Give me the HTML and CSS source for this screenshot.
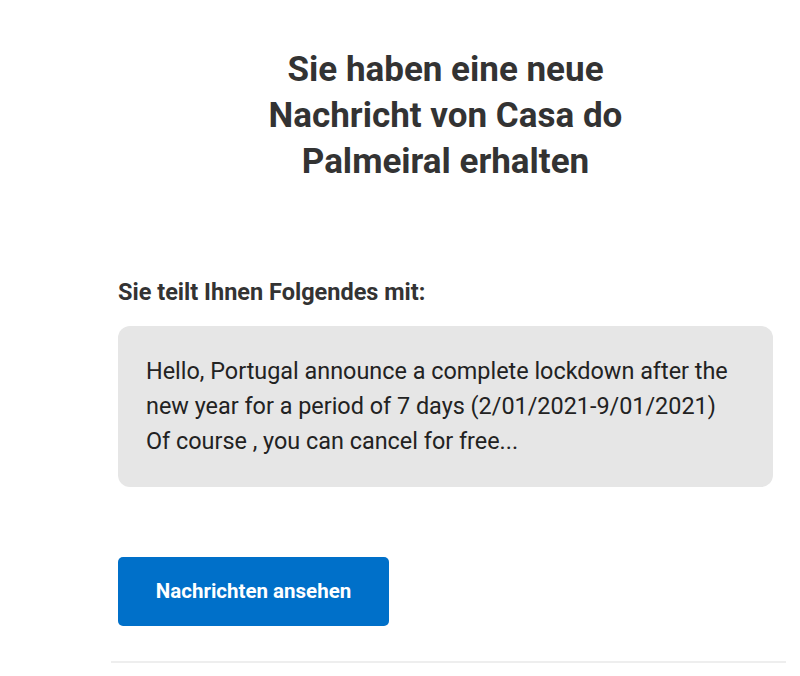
FILE: index.html
```html
<!DOCTYPE html>
<html lang="de">
<head>
    <meta charset="UTF-8">
    <meta name="viewport" content="width=device-width, initial-scale=1.0">
    <title>Neue Nachricht</title>
    <link rel="stylesheet" href="styles.css">
</head>
<body>
    <div class="mail">
        <h1 class="title">Sie haben eine neue Nachricht von Casa do Palmeiral erhalten</h1>

        <h2 class="intro">Sie teilt Ihnen Folgendes mit:</h2>
        <div class="message">
            Hello, Portugal announce a complete lockdown after the new year for a period of 7 days (2/01/2021-9/01/2021)<br>
            Of course , you can cancel for free...
        </div>

        <a class="btn" href="#">Nachrichten ansehen</a>
    </div>
    <hr class="divider">
</body>
</html>
```

FILE: styles.css
```css
body {
    font-family: Roboto, 'Liberation Sans', sans-serif;
    background-color: #fff;
    color: #333;
    margin: 0;
}

.mail {
    width: 655px;
    margin-left: 118px;
}

.title {
    max-width: 420px;
    margin: 47px auto 0;
    text-align: center;
    font-size: 35px;
    line-height: 46px;
    font-weight: 700;
    color: #333;
}

.intro {
    margin: 93px 0 0;
    font-size: 23.5px;
    line-height: 28px;
    font-weight: 700;
    color: #333;
}

.message {
    margin-top: 20px;
    padding: 28px 28px 28px;
    background-color: #e6e6e6;
    border-radius: 12px;
    font-size: 23.4px;
    line-height: 35px;
    color: #222;
}

.btn {
    display: block;
    margin-top: 70px;
    width: 271px;
    height: 69px;
    line-height: 69px;
    text-align: center;
    background-color: #0070c9;
    color: #fff;
    font-size: 20.5px;
    font-weight: 700;
    text-decoration: none;
    border-radius: 5px;
}

.divider {
    margin: 35px 14px 0 111px;
    border: none;
    border-top: 2px solid #eee;
}
```
